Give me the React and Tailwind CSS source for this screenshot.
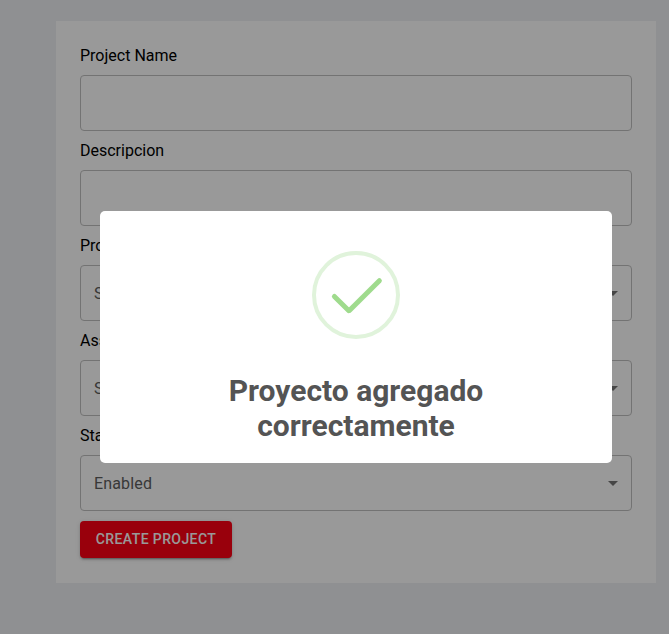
import React from "react";

function Field({ label, value, select }) {
  return (
    <div className="mb-2.5">
      <label className="mb-2.5 block text-[16px] leading-[19px] text-black">{label}</label>
      <div className="flex h-14 items-center justify-between rounded border border-[#c0c0c0] pr-[6px] pl-[13px]">
        <span className="pt-0.5 text-[16px] leading-6 tracking-[0.15px] text-[#5e5e5e]">{value}</span>
        {select && (
          <svg className="h-6 w-6" viewBox="0 0 24 24" fill="#757575">
            <path d="M7 10l5 5 5-5z" />
          </svg>
        )}
      </div>
    </div>
  );
}

function SuccessIcon() {
  return (
    <svg className="h-[88px] w-[88px]" viewBox="0 0 88 88" fill="none">
      <circle cx="44" cy="44" r="42" stroke="#e0f3db" strokeWidth="4" />
      <g stroke="#9fdb8d" strokeWidth="5" strokeLinecap="round">
        <path d="M22.4 45.4L36.6 59.6" />
        <path d="M37.65 59.35L67.35 29.65" />
      </g>
    </svg>
  );
}

export default function App() {
  return (
    <div className="relative h-[634px] w-[669px] overflow-hidden bg-[#eef0f4] pt-[21px] pl-14 font-[Roboto,sans-serif]">
      <form className="h-[562px] w-[600px] bg-white px-6 pt-[25px]">
        <Field label="Project Name" />
        <Field label="Descripcion" />
        <Field label="Project Manager" value="Select Project Manager" select />
        <Field label="Assigned To" value="Select Employee" select />
        <Field label="Status" value="Enabled" select />
        <button
          type="button"
          className="block h-[37px] w-[152px] rounded bg-[#ff0014] text-[14px] font-medium tracking-[0.4px] text-white uppercase shadow-[0px_3px_1px_-2px_rgba(0,0,0,0.2),0px_2px_2px_0px_rgba(0,0,0,0.14),0px_1px_5px_0px_rgba(0,0,0,0.12)]"
        >
          Create Project
        </button>
      </form>
      <div className="absolute inset-0 bg-black/40 pt-[211px] pl-[100px]">
        <div className="flex h-[252px] w-[512px] flex-col items-center rounded-[5px] bg-white pt-10">
          <SuccessIcon />
          <h2 className="mt-[34px] w-[300px] text-center text-[30px] leading-[35px] font-bold text-[#545454]">
            Proyecto agregado correctamente
          </h2>
        </div>
      </div>
    </div>
  );
}
